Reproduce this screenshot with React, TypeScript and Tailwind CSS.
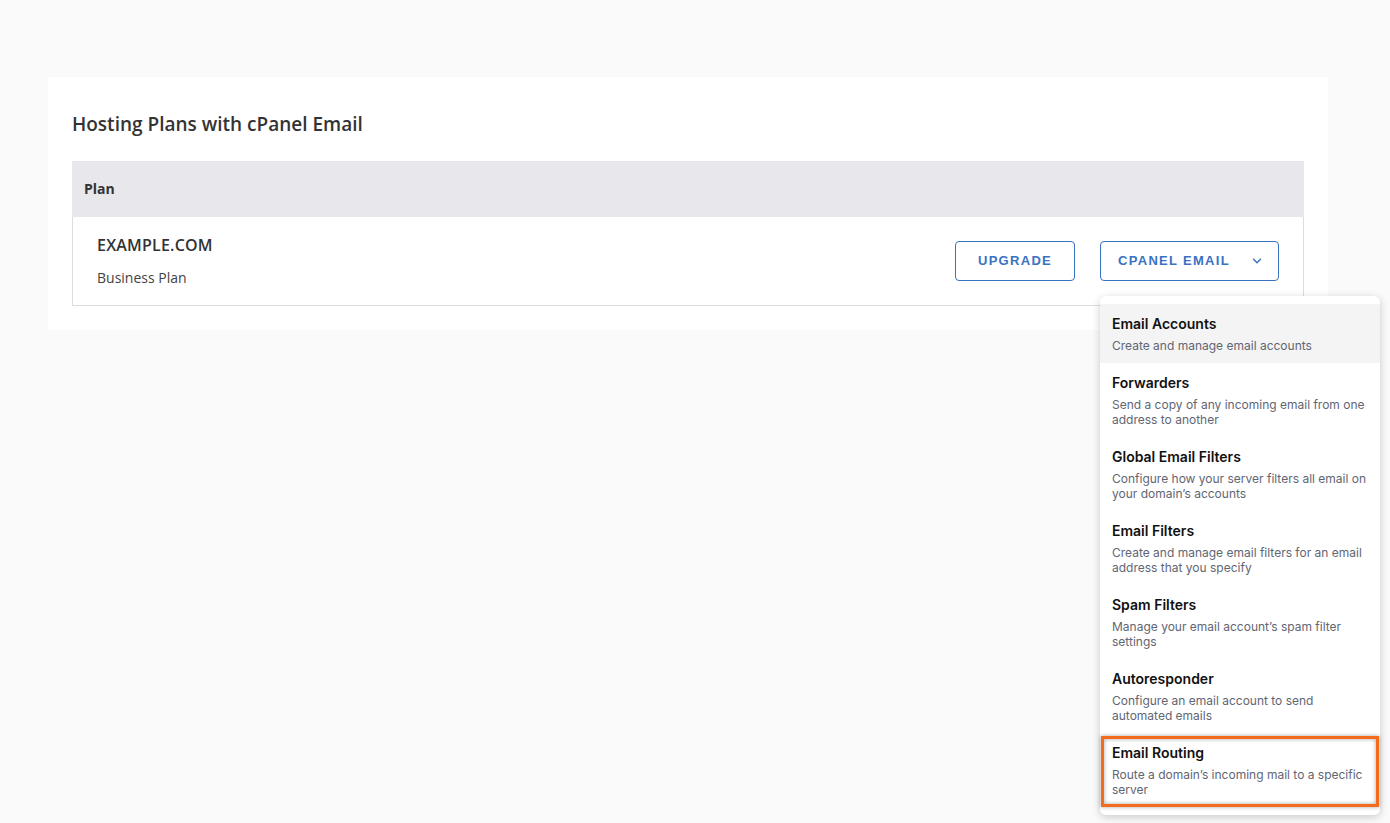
import React from 'react';
import { ChevronDown } from 'lucide-react';

const menuItems = [
  { id: 1, title: 'Email Accounts', desc: 'Create and manage email accounts', active: true },
  { id: 2, title: 'Forwarders', desc: 'Send a copy of any incoming email from one address to another' },
  { id: 3, title: 'Global Email Filters', desc: 'Configure how your server filters all email on your domain\u2019s accounts' },
  { id: 4, title: 'Email Filters', desc: 'Create and manage email filters for an email address that you specify' },
  { id: 5, title: 'Spam Filters', desc: 'Manage your email account\u2019s spam filter settings' },
  { id: 6, title: 'Autoresponder', desc: 'Configure an email account to send automated emails' },
  { id: 7, title: 'Email Routing', desc: 'Route a domain\u2019s incoming mail to a specific server', marked: true },
];

const App: React.FC = () => {
  return (
    <div className="min-h-[823px] bg-[#fafafa] px-12 pt-[77px] font-['Open_Sans',sans-serif]">
      {/* Hosting card */}
      <div className="w-[1280px] bg-white px-6 pt-[33px] pb-6">
        <h1 className="mb-[23px] text-[19px] leading-7 font-semibold text-[#333333]">Hosting Plans with cPanel Email</h1>

        <div>
          <div className="flex h-[56px] items-center bg-[#e8e8ec] px-3">
            <span className="text-sm font-bold text-[#333333]">Plan</span>
          </div>
          <div className="flex items-center justify-between border-x border-b border-[#dddddd] pt-4 pb-[17px] pl-6 pr-6">
            <div className="flex flex-col gap-[11px]">
              <span className="text-base leading-6 font-semibold tracking-[0.2px] text-[#333333]">EXAMPLE.COM</span>
              <span className="text-sm leading-5 text-[#444444]">Business Plan</span>
            </div>
            <div className="flex items-center gap-[25px] font-['Liberation_Sans',Arial,sans-serif]">
              <button className="h-10 w-[120px] rounded border border-[#3a72c2] text-[13px] font-bold tracking-[1.3px] text-[#3a72c2]">
                UPGRADE
              </button>
              <div className="relative">
                <button className="flex h-10 w-[179px] items-center justify-between rounded border border-[#3a72c2] pl-[17px] pr-[14px] text-[13px] font-bold tracking-[1.3px] text-[#3a72c2]">
                  CPANEL EMAIL
                  <ChevronDown className="h-[14px] w-[14px]" strokeWidth={2.5} />
                </button>

                {/* Dropdown menu */}
                <div className="absolute left-0 top-full z-10 mt-[15px] w-[280px] rounded-md bg-white py-2 font-['Inter',sans-serif] shadow-[0_2px_8px_rgba(0,0,0,0.2)]">
                  {menuItems.map(item => (
                    <div
                      key={item.id}
                      className={`relative flex flex-col gap-1 px-3 py-[10px] ${item.active ? 'bg-[#f4f4f4]' : ''}`}
                    >
                      <span className="text-sm leading-5 font-semibold tracking-normal text-[#111111]">{item.title}</span>
                      <span className="text-xs leading-[15px] tracking-normal text-[#5f6673]">{item.desc}</span>
                      {item.marked && (
                        <div className="absolute inset-x-[1px] top-[3px] bottom-0 border-[3px] border-[#f46b1e] shadow-[0_0_4px_rgba(0,0,0,0.35),inset_0_0_4px_rgba(0,0,0,0.35)]" />
                      )}
                    </div>
                  ))}
                </div>
              </div>
            </div>
          </div>
        </div>
      </div>
    </div>
  );
};

export default App;
